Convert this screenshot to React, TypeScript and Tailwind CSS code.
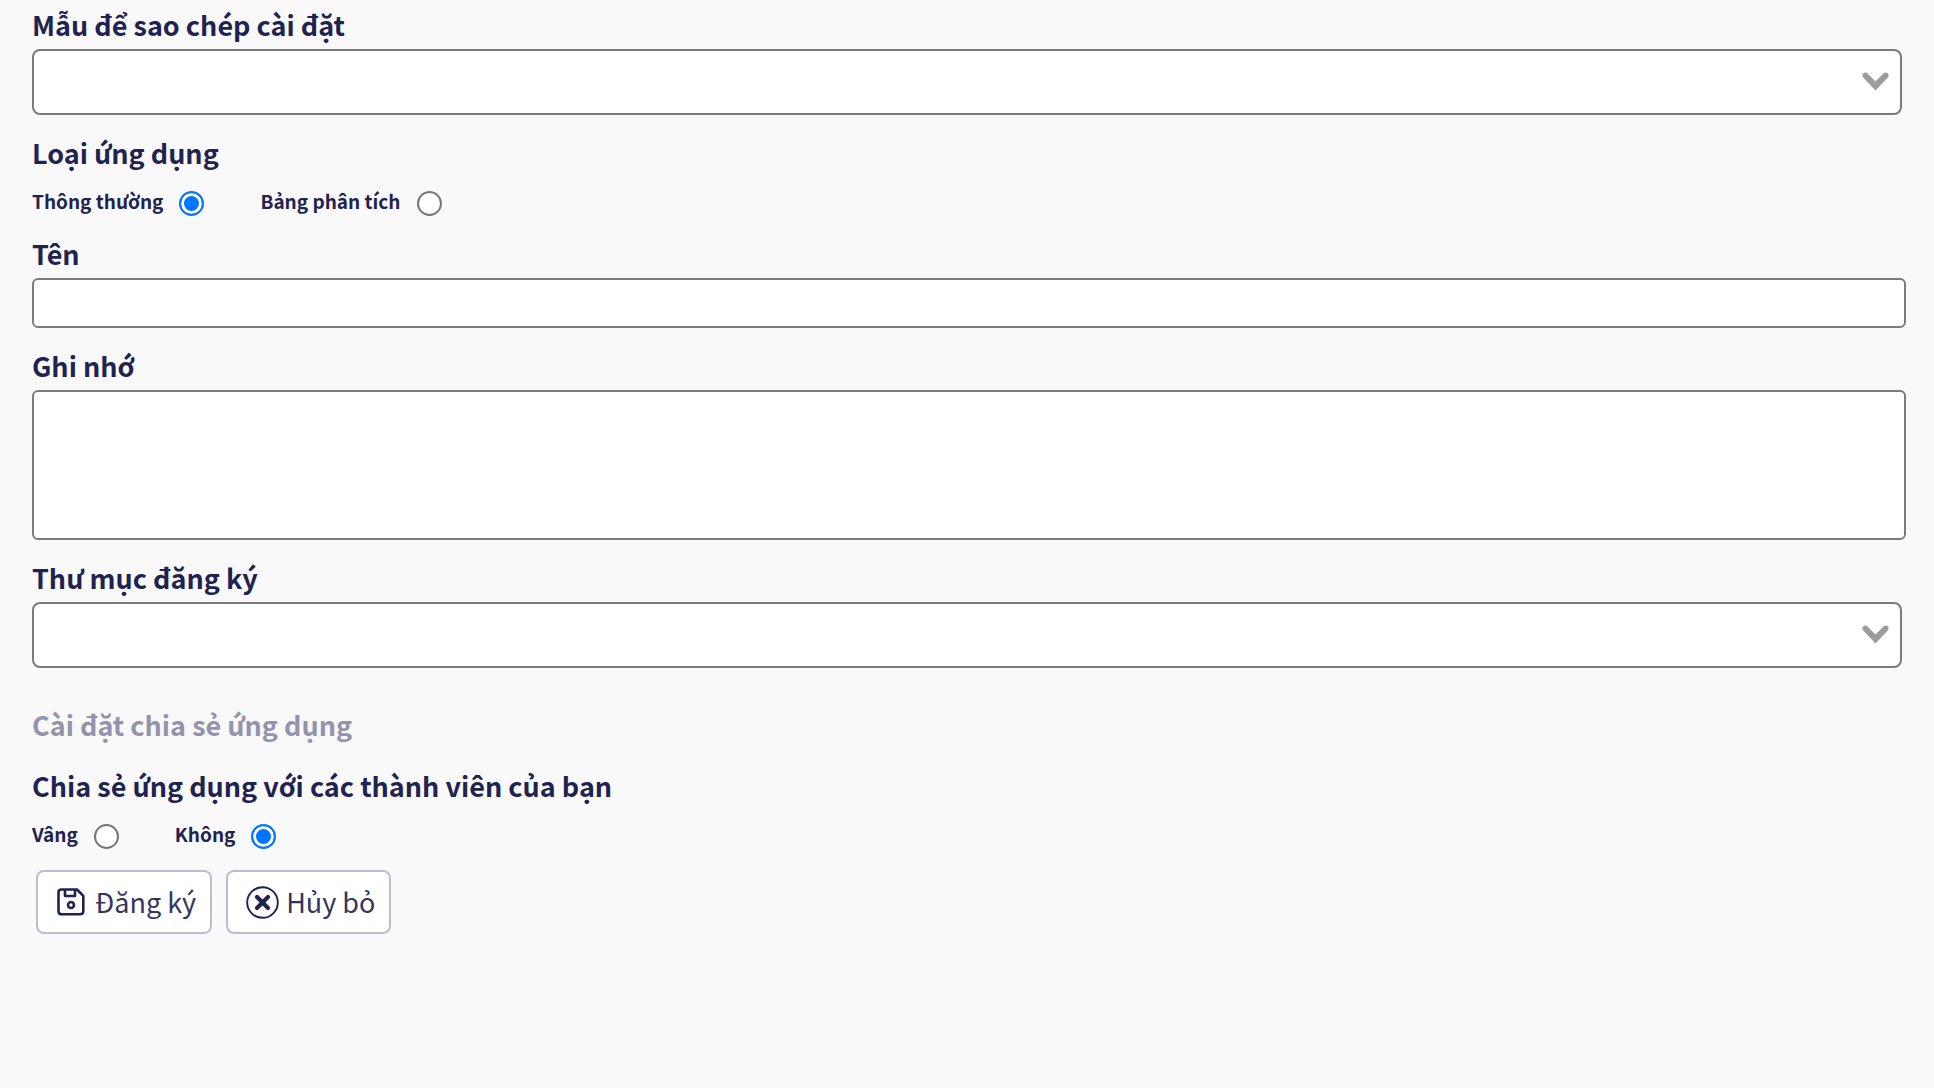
import React, { useState } from 'react';

type Option = { value: string; label: string };

const APP_TYPES: Option[] = [
    { value: 'normal', label: 'Thông thường' },
    { value: 'dashboard', label: 'Bảng phân tích' },
];

const SHARE_OPTIONS: Option[] = [
    { value: 'yes', label: 'Vâng' },
    { value: 'no', label: 'Không' },
];

const labelClass = 'block text-[27px] leading-10 font-bold';

const SelectField = ({ id, label }: { id: string; label: string }) => (
    <div>
        <label htmlFor={id} className={labelClass}>{label}</label>
        <div className="relative mt-1 mr-1">
            <select id={id} className="block w-full h-[66px] px-4 pr-16 text-[19px] appearance-none bg-white border-2 border-[#7b7b7b] rounded-lg">
                <option value=""></option>
            </select>
            <svg className="absolute right-[13px] top-[23px] w-[27px] h-[20px] pointer-events-none" viewBox="0 0 27 20" aria-hidden="true">
                <path d="M1.2 5.6C-1.4 2.4 2.6-1 5.6 1.4L13.5 9.4L21.4 1.4C24.4-1 28.4 2.4 25.8 5.6L13.5 18.6Z" fill="#9c9c9c" />
            </svg>
        </div>
    </div>
);

const RadioGroup = ({ name, legend, options, value, onChange }: {
    name: string;
    legend: string;
    options: Option[];
    value: string;
    onChange: (v: string) => void;
}) => (
    <fieldset>
        <legend className={labelClass}>{legend}</legend>
        <div className="flex gap-14 mt-3">
            {options.map(o => (
                <label key={o.value} className="flex items-center gap-4 text-[19px] leading-7 font-bold">
                    {o.label}
                    <input
                        type="radio"
                        name={name}
                        value={o.value}
                        checked={value === o.value}
                        onChange={() => onChange(o.value)}
                        className="appearance-none mt-1.5 w-[25px] h-[25px] rounded-full bg-white border-2 border-[#767676] checked:border-[#0075ff] checked:bg-[#0075ff] checked:shadow-[inset_0_0_0_3px_white]"
                    />
                </label>
            ))}
        </div>
    </fieldset>
);

const SaveIcon = () => (
    <svg className="w-[28px] h-[28px]" viewBox="0 0 28 28" fill="none" stroke="#1f2350" strokeWidth="2.6" strokeLinejoin="round" aria-hidden="true">
        <path d="M4.500 1.500H20L26.300 7.800V23Q26.300 26.300 23 26.300H4.800Q1.500 26.300 1.500 23V4.500Q1.500 1.500 4.500 1.500Z" />
        <path d="M8 1.500V8H18V1.500" />
        <circle cx="14" cy="17" r="3" />
    </svg>
);

const CancelIcon = () => (
    <svg className="w-[33px] h-[33px]" viewBox="0 0 33 33" fill="none" stroke="#1f2350" strokeLinecap="round" aria-hidden="true">
        <circle cx="16.500" cy="16.500" r="15.300" strokeWidth="1.900" />
        <path d="M11 11L22 22M22 11L11 22" strokeWidth="4.200" />
    </svg>
);

const buttonClass = 'flex items-center h-16 pr-[14px] bg-white border-2 border-[#bdbcd3] rounded-lg text-[27px] leading-10 text-[#34345e]';

const App = () => {
    const [appType, setAppType] = useState('normal');
    const [share, setShare] = useState('no');

    return (
        <div className="min-h-screen bg-[#f9f9f9] text-[#1f2350] font-['Noto_Sans_CJK_JP','Noto_Sans',sans-serif]">
            <form className="flex flex-col pt-[5px] pl-8 pr-7" onSubmit={e => e.preventDefault()}>
                <div className="flex flex-col gap-[18px]">
                    <SelectField id="template" label="Mẫu để sao chép cài đặt" />
                    <RadioGroup name="appType" legend="Loại ứng dụng" options={APP_TYPES} value={appType} onChange={setAppType} />
                    <div>
                        <label htmlFor="name" className={labelClass}>Tên</label>
                        <input id="name" type="text" className="block w-full h-[50px] mt-1 px-3 text-[19px] bg-white border-2 border-[#7b7b7b] rounded-md" />
                    </div>
                    <div>
                        <label htmlFor="memo" className={labelClass}>Ghi nhớ</label>
                        <textarea id="memo" className="block w-full h-[150px] mt-1 p-3 text-[19px] resize-none bg-white border-2 border-[#7b7b7b] rounded-md" />
                    </div>
                    <SelectField id="folder" label="Thư mục đăng ký" />
                </div>

                <h2 className="mt-[37px] mb-[21px] text-[27px] leading-10 font-bold text-[#9393ad]">Cài đặt chia sẻ ứng dụng</h2>
                <RadioGroup name="share" legend="Chia sẻ ứng dụng với các thành viên của bạn" options={SHARE_OPTIONS} value={share} onChange={setShare} />

                <div className="flex gap-[14px] mt-[21px] ml-1">
                    <button type="submit" className={`${buttonClass} gap-[10px] pl-[19px]`}>
                        <SaveIcon />
                        Đăng ký
                    </button>
                    <button type="button" className={`${buttonClass} gap-[7px] pl-[18px]`}>
                        <CancelIcon />
                        Hủy bỏ
                    </button>
                </div>
            </form>
        </div>
    );
};

export default App;
